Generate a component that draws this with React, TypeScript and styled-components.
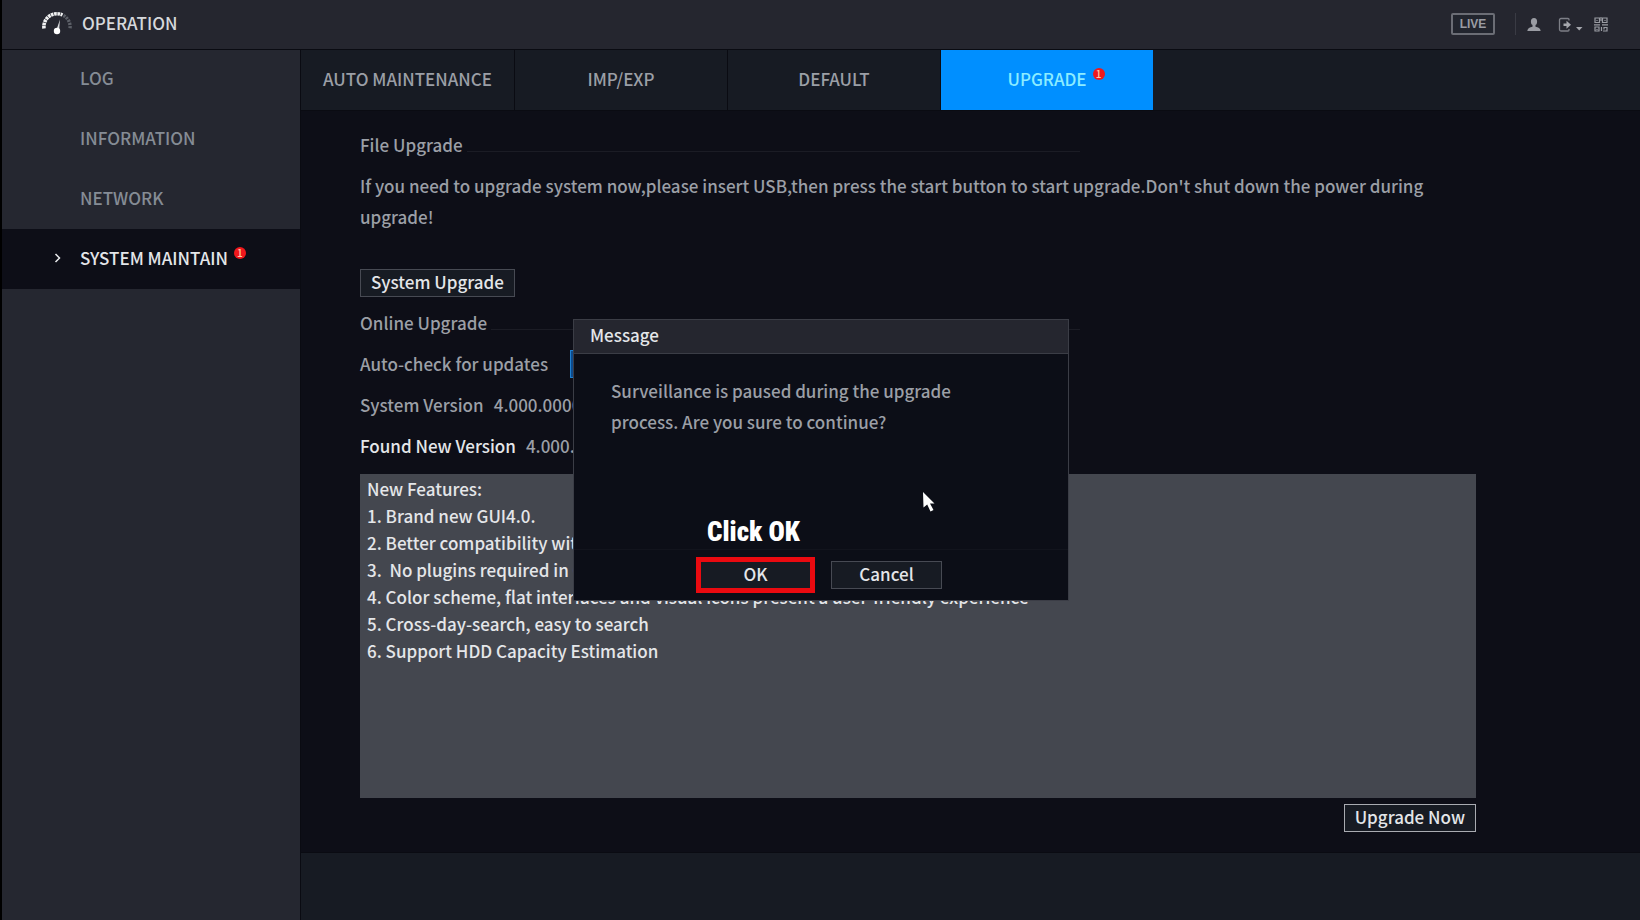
import React from "react";
import styled, { createGlobalStyle } from "styled-components";

const color = {
  header: "#25262f",
  side: "#252730",
  bar: "#171b23",
  body: "#0d0e17",
  line: "#0a0b12",
  text: "#9b9fa6",
  muted: "#858c95",
  bright: "#e4e6e9",
  accent: "#008fff",
  alert: "#f0181c",
};

const GlobalStyle = createGlobalStyle`
  * { box-sizing: border-box; }
  body {
    margin: 0;
    background: ${color.body};
    color: ${color.text};
    font: 500 17px/30px "Noto Sans CJK SC", "Noto Sans", sans-serif;
  }
  button, input { font: inherit; color: inherit; margin: 0; }
  h1, h2, p, ol, ul { margin: 0; padding: 0; font-weight: inherit; font-size: inherit; list-style: none; }
  a { color: inherit; text-decoration: none; }
`;

const Page = styled.div`
  min-height: 100vh;
  display: flex;
  flex-direction: column;
  border-left: 2px solid #000;
`;

const Header = styled.header`
  position: relative;
  display: flex;
  align-items: center;
  height: 49px;
  padding: 0 32px 2px 40px;
  background: ${color.header};
  box-shadow: 0 1px 0 ${color.line};
`;

const Title = styled.h1`
  margin-left: 8px;
  padding-bottom: 2px;
  color: #d6d8dc;
  flex: 1;
`;

const Tools = styled.div`
  display: flex;
  align-items: center;
  color: #9a9ca3;
`;

const LiveButton = styled.button`
  width: 44px;
  height: 22px;
  padding: 0;
  border: 2px solid #6b6d75;
  border-radius: 2px;
  background: #22252e;
  font: bold 12px/16px "Liberation Sans", sans-serif;
`;

const Separator = styled.span`
  width: 1px;
  height: 22px;
  margin: 0 11px 0 20px;
  background: #3a3b44;
`;

const IconButton = styled.button<{ $gap?: number }>`
  display: flex;
  padding: 2px 0 0;
  margin-left: ${(p) => p.$gap ?? 0}px;
  border: 0;
  background: none;
`;

const Columns = styled.div`
  flex: 1;
  display: grid;
  grid-template-columns: 298px minmax(0, 1fr);
`;

const Sidebar = styled.nav`
  background: ${color.side};
`;

const SideLink = styled.a<{ $active?: boolean }>`
  display: flex;
  align-items: center;
  height: 60px;
  padding: 0 16px 2px 50px;
  color: ${(p) => (p.$active ? color.bright : color.muted)};
  background: ${(p) => (p.$active ? color.body : "transparent")};
`;

const Marker = styled.span`
  display: flex;
  width: 28px;
`;

const Labelled = styled.span`
  position: relative;
`;

const Badge = styled.span`
  position: absolute;
  top: 4px;
  left: 100%;
  width: 12px;
  height: 12px;
  margin-left: 6px;
  border-radius: 6px;
  background: ${color.alert};
  color: #ffc9a8;
  font-size: 10px;
  line-height: 11px;
  text-align: center;
`;

const Main = styled.main`
  display: flex;
  flex-direction: column;
  border-left: 1px solid ${color.line};
`;

const Tabs = styled.nav`
  display: flex;
  height: 62px;
  background: ${color.bar};
  border-top: 1px solid ${color.line};
  border-bottom: 1px solid ${color.line};
`;

const Tab = styled.a<{ $active?: boolean }>`
  display: flex;
  align-items: center;
  justify-content: center;
  width: 213px;
  padding-bottom: 3px;
  color: ${(p) => (p.$active ? "#8cecff" : color.text)};
  background: ${(p) => (p.$active ? color.accent : "transparent")};
  & + & { border-left: 1px solid ${color.line}; }
`;

const Content = styled.section`
  flex: 1;
  padding: 19px 164px 18px 59px;
`;

const SectionTitle = styled.h2`
  display: flex;
  align-items: center;
  gap: 4px;
  max-width: 720px;
  height: 30px;
  &::after {
    content: "";
    flex: 1;
    height: 1px;
    margin-top: 12px;
    background: #1b1c25;
  }
`;

const Intro = styled.p`
  margin: 10px 0 37px;
  line-height: 31px;
`;

const Button = styled.button<{ $strong?: boolean; $width?: number }>`
  display: block;
  height: 28px;
  width: ${(p) => (p.$width ? `${p.$width}px` : "auto")};
  padding: 0 10px 2px;
  border: 1px solid ${(p) => (p.$strong ? "#a9abb1" : "#474a53")};
  background: ${color.bar};
  color: ${color.bright};
  line-height: 24px;
`;

const Row = styled.div`
  display: flex;
  align-items: center;
  gap: 10px;
  height: 30px;
  margin-top: 11px;
`;

const SpacedTitle = styled(SectionTitle)`
  margin-top: 11px;
`;

const Strong = styled.span`
  color: ${color.bright};
`;

const Switch = styled.input`
  appearance: none;
  width: 56px;
  height: 28px;
  margin: 0 0 0 12px;
  border: 1px solid #1d7fd0;
  background: #0d4a8c;
`;

const Features = styled.div`
  height: 324px;
  margin-top: 13px;
  padding: 1px 7px;
  background: #44474f;
  color: ${color.bright};
  line-height: 27px;
  white-space: pre-wrap;
`;

const Actions = styled.div`
  display: flex;
  justify-content: flex-end;
  margin-top: 6px;
`;

const Footer = styled.footer`
  height: 68px;
  background: ${color.bar};
  border-top: 1px solid ${color.line};
`;

const Overlay = styled.div`
  position: fixed;
  inset: 0 0 0 2px;
  display: flex;
  align-items: center;
  justify-content: center;
`;

const Dialog = styled.div`
  position: relative;
  width: 496px;
  border: 1px solid #3b3d46;
  background: #0c0e17;
`;

const DialogTitle = styled.h2`
  height: 34px;
  padding: 0 16px;
  background: ${color.header};
  border-bottom: 1px solid #3b3d46;
  color: ${color.bright};
`;

const DialogText = styled.p`
  height: 195px;
  padding: 21px 92px 0 37px;
  line-height: 31px;
`;

const DialogActions = styled.div`
  display: flex;
  align-items: center;
  justify-content: center;
  gap: 20px;
  height: 51px;
  padding-bottom: 1px;
  border-top: 1px solid #12141d;
`;

const Callout = styled.div`
  position: relative;
  outline: 5px solid #ea0a10;
  outline-offset: -1px;
`;

const CalloutText = styled.span`
  position: absolute;
  bottom: 100%;
  left: 0;
  right: 4px;
  margin-bottom: 13px;
  color: #fff;
  font: 900 27px/32px "Roboto Condensed", "Open Sans Condensed", "Liberation Sans", sans-serif;
  text-align: center;
  white-space: nowrap;
`;

const Pointer = styled.svg`
  position: absolute;
  left: 349px;
  top: 172px;
`;

const GaugeIcon = () => (
  <svg width="32" height="26" viewBox="0 0 32 26" fill="none" aria-hidden="true">
    <path d="M2 17.500A13 13 0 0 1 20.500 4" stroke="#f1f2f3" strokeWidth="3.600" strokeDasharray="2.6 0.6" />
    <path d="M21.500 4.500A13 13 0 0 1 28 17.500" stroke="#5d6068" strokeWidth="3.400" strokeDasharray="2.2 1" />
    <path d="M18 8.500L14 20L17 20.500Z" fill="#d8dadd" />
    <circle cx="15" cy="20" r="3.200" fill="#fff" />
  </svg>
);

const UserIcon = () => (
  <svg width="14" height="14" viewBox="0 0 14 14" fill="currentColor" aria-hidden="true">
    <ellipse cx="7" cy="3.700" rx="3.100" ry="3.600" />
    <path d="M5.500 7h3v1.800c2.800.4 4.900 1.700 5.200 4.200H.3c.3-2.500 2.400-3.800 5.200-4.200z" />
  </svg>
);

const ExitIcon = () => (
  <svg width="25" height="16" viewBox="0 0 25 16" aria-hidden="true">
    <path d="M11 3.500V2.500Q11 1.500 10 1.500H3Q1.500 1.500 1.500 3V12.500Q1.500 14 3 14H10Q11 14 11 13V12" fill="none" stroke="#7d7f87" strokeWidth="1.300" />
    <path d="M5.500 6.500H8.500V3.800L13 7.800L8.500 11.800V9H5.500Z" fill="#a5a7ad" />
    <path d="M18 10H24.500L21.200 13.500Z" fill="#a5a7ad" />
  </svg>
);

const CodeIcon = () => (
  <svg width="14" height="15" viewBox="0 0 14 15" fill="none" stroke="currentColor" strokeWidth="1.200" aria-hidden="true">
    <path d="M1 1H5.500V5.500H1ZM8.500 1H13V5.500H8.500ZM1 10H5V14H1Z" />
    <path d="M0 7.800H6M8 7.800H14M3 3V4M11 3V4M7 0V4M7.500 10V14M9 14H13V10.500H10V12.500M3 12V13" />
  </svg>
);

const sections = ["LOG", "INFORMATION", "NETWORK", "SYSTEM MAINTAIN"];
const tabs = ["AUTO MAINTENANCE", "IMP/EXP", "DEFAULT", "UPGRADE"];
const features = [
  "1. Brand new GUI4.0.",
  "2. Better compatibility with browsers",
  "3.  No plugins required in Chrome",
  "4. Color scheme, flat interfaces and visual icons present a user-friendly experience",
  "5. Cross-day-search, easy to search",
  "6. Support HDD Capacity Estimation",
];

export default function App() {
  return (
    <>
      <GlobalStyle />
      <Page>
        <Header>
          <GaugeIcon />
          <Title>OPERATION</Title>
          <Tools>
            <LiveButton>LIVE</LiveButton>
            <Separator />
            <IconButton aria-label="User"><UserIcon /></IconButton>
            <IconButton aria-label="Log out" $gap={17}><ExitIcon /></IconButton>
            <IconButton aria-label="QR code" $gap={11}><CodeIcon /></IconButton>
          </Tools>
        </Header>
        <Columns>
          <Sidebar>
            {sections.map((name) => {
              const active = name === "SYSTEM MAINTAIN";
              return (
                <SideLink key={name} href="#" $active={active}>
                  <Marker>
                    {active && (
                      <svg width="10" height="10" viewBox="0 0 10 10" fill="none" stroke="#e9ebee" strokeWidth="1.500" aria-hidden="true">
                        <path d="M3.500 1L7.500 5L3.500 9" />
                      </svg>
                    )}
                  </Marker>
                  <Labelled>
                    {name}
                    {active && <Badge>1</Badge>}
                  </Labelled>
                </SideLink>
              );
            })}
          </Sidebar>
          <Main>
            <Tabs>
              {tabs.map((name) => {
                const active = name === "UPGRADE";
                return (
                  <Tab key={name} href="#" $active={active}>
                    <Labelled>
                      {name}
                      {active && <Badge>1</Badge>}
                    </Labelled>
                  </Tab>
                );
              })}
            </Tabs>
            <Content>
              <SectionTitle>File Upgrade</SectionTitle>
              <Intro>
                If you need to upgrade system now,please insert USB,then press the start button to start
                upgrade.Don't shut down the power during upgrade!
              </Intro>
              <Button>System Upgrade</Button>
              <SpacedTitle>Online Upgrade</SpacedTitle>
              <Row>
                <label htmlFor="auto-check">Auto-check for updates</label>
                <Switch id="auto-check" type="checkbox" defaultChecked />
              </Row>
              <Row>
                <span>System Version</span>
                <span>4.000.0000000</span>
              </Row>
              <Row>
                <Strong>Found New Version</Strong>
                <span>4.000.0000000</span>
              </Row>
              <Features>
                <p>New Features:</p>
                <ol>
                  {features.map((line) => (
                    <li key={line}>{line}</li>
                  ))}
                </ol>
              </Features>
              <Actions>
                <Button $strong>Upgrade Now</Button>
              </Actions>
            </Content>
            <Footer />
          </Main>
        </Columns>
      </Page>
      <Overlay>
        <Dialog role="dialog" aria-labelledby="message-title">
          <DialogTitle id="message-title">Message</DialogTitle>
          <DialogText>Surveillance is paused during the upgrade process. Are you sure to continue?</DialogText>
          <DialogActions>
            <Callout>
              <CalloutText>Click OK</CalloutText>
              <Button $width={111}>OK</Button>
            </Callout>
            <Button $width={111}>Cancel</Button>
          </DialogActions>
          <Pointer width="12" height="20" viewBox="0 0 12 20" fill="#fff" aria-hidden="true">
            <path d="M0 0L11.500 11.500H7L10.500 18L7.500 19.500L4.200 12.500L0.500 15.500Z" />
          </Pointer>
        </Dialog>
      </Overlay>
    </>
  );
}
